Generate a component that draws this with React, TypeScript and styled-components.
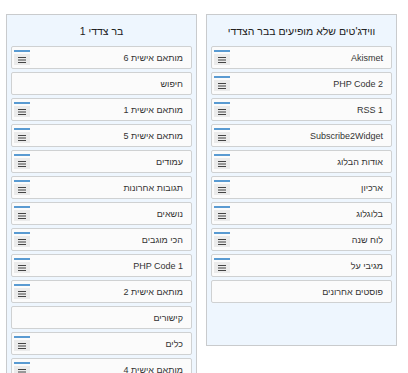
import styled, { createGlobalStyle } from "styled-components";

const GlobalStyle = createGlobalStyle`
  html, body {
    margin: 0;
    padding: 0;
    background: #ffffff;
  }
  body {
    font-family: "Liberation Sans", "DejaVu Sans", sans-serif;
    color: #333333;
  }
`;

const Board = styled.div`
  direction: rtl;
  display: flex;
  align-items: flex-start;
  gap: 9px;
  padding: 14px 11px 0 0;
`;

const Panel = styled.section<{ $padBottom?: number }>`
  box-sizing: border-box;
  width: 191px;
  background: #eef6fe;
  border: 1px solid #c9cbcd;
  padding: 0 4px ${(p) => p.$padBottom ?? 0}px;
`;

const PanelTitle = styled.h3`
  margin: 0;
  height: 31px;
  display: flex;
  align-items: center;
  justify-content: center;
  font-size: 10.5px;
  font-weight: normal;
  color: #222222;
`;

const ItemList = styled.div`
  display: flex;
  flex-direction: column;
  gap: 3px;
`;

const Item = styled.div`
  box-sizing: border-box;
  height: 23px;
  display: flex;
  align-items: center;
  justify-content: space-between;
  padding: 0 8px 0 2px;
  background: #fbfbfb;
  border: 1px solid #cfd1d2;
  border-radius: 2px;
`;

const ItemLabel = styled.span`
  font-size: 9px;
  color: #333333;
  white-space: nowrap;
`;

const Handle = styled.div`
  display: flex;
  flex-direction: column;
  gap: 2px;
  width: 16px;
`;

const HandleBar = styled.div`
  height: 2px;
  background: #5a9bd2;
`;

const MenuButton = styled.div`
  height: 11px;
  display: flex;
  align-items: center;
  justify-content: center;
  background: #ebebeb;
`;

type Widget = { name: string; handle?: boolean };

const available: Widget[] = [
  { name: "Akismet", handle: true },
  { name: "PHP Code 2", handle: true },
  { name: "RSS 1", handle: true },
  { name: "Subscribe2Widget", handle: true },
  { name: "אודות הבלוג", handle: true },
  { name: "ארכיון", handle: true },
  { name: "בלוגלוג", handle: true },
  { name: "לוח שנה", handle: true },
  { name: "מגיבי על", handle: true },
  { name: "פוסטים אחרונים" },
];

const sidebar: Widget[] = [
  { name: "מותאם אישית 6", handle: true },
  { name: "חיפוש" },
  { name: "מותאם אישית 1", handle: true },
  { name: "מותאם אישית 5", handle: true },
  { name: "עמודים", handle: true },
  { name: "תגובות אחרונות", handle: true },
  { name: "נושאים", handle: true },
  { name: "הכי מוגבים", handle: true },
  { name: "PHP Code 1", handle: true },
  { name: "מותאם אישית 2", handle: true },
  { name: "קישורים" },
  { name: "כלים", handle: true },
  { name: "מותאם אישית 4", handle: true },
];

const MenuIcon = () => (
  <svg width="8" height="6" viewBox="0 0 8 6">
    <rect x="0" y="0" width="8" height="1" fill="#444" />
    <rect x="0" y="2.5" width="8" height="1" fill="#444" />
    <rect x="0" y="5" width="8" height="1" fill="#444" />
  </svg>
);

const WidgetItem = ({ widget }: { widget: Widget }) => (
  <Item>
    <ItemLabel>{widget.name}</ItemLabel>
    {widget.handle && (
      <Handle>
        <HandleBar />
        <MenuButton>
          <MenuIcon />
        </MenuButton>
      </Handle>
    )}
  </Item>
);

export default function App() {
  return (
    <>
      <GlobalStyle />
      <Board>
        <Panel $padBottom={42}>
          <PanelTitle>ווידג'טים שלא מופיעים בבר הצדדי</PanelTitle>
          <ItemList>
            {available.map((w) => (
              <WidgetItem key={w.name} widget={w} />
            ))}
          </ItemList>
        </Panel>
        <Panel $padBottom={20}>
          <PanelTitle>בר צדדי 1</PanelTitle>
          <ItemList>
            {sidebar.map((w) => (
              <WidgetItem key={w.name} widget={w} />
            ))}
          </ItemList>
        </Panel>
      </Board>
    </>
  );
}
